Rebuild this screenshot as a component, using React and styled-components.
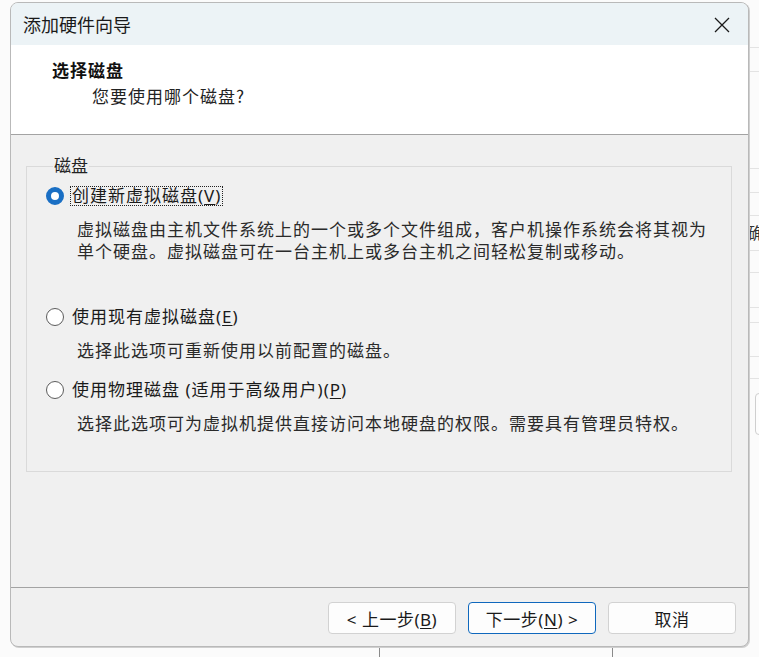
import React from "react";
import styled, { createGlobalStyle } from "styled-components";

const GlobalStyle = createGlobalStyle`
  html, body {
    margin: 0;
    padding: 0;
    background: #fbfbfb;
  }
  body {
    font-family: "Noto Sans", "Noto Sans CJK SC", sans-serif;
    color: #1a1a1a;
  }
`;

const bgRows = [48, 24, 97, 24, 23, 35, 22, 35, 15, 34, 22];

function CloseIcon() {
  return (
    <svg width="16" height="16" viewBox="0 0 16 16">
      <path d="M1 1 L15 15 M15 1 L1 15" stroke="#1a1a1a" strokeWidth="1.3" fill="none" />
    </svg>
  );
}

function Option({ checked, focused, label, hotkey, after, desc, gap }) {
  return (
    <OptionBlock $gap={gap}>
      <OptionRow>
        <Radio $checked={checked} />
        <OptionLabel $focused={focused}>
          {label}(<u>{hotkey}</u>){after}
        </OptionLabel>
      </OptionRow>
      <Desc>{desc}</Desc>
    </OptionBlock>
  );
}

export default function App() {
  return (
    <>
      <GlobalStyle />
      <Desktop>
        <BgApp>
          <BgTable>
            {bgRows.map((h, i) => (
              <BgRow key={i} style={{ height: h }}>
                {i === 5 && <BgCell>确定</BgCell>}
              </BgRow>
            ))}
          </BgTable>
          <BgButton />
          <BgDivider $left={379} />
          <BgDivider $left={612} />
        </BgApp>

        <Dialog>
          <TitleBar>
            <Title>添加硬件向导</Title>
            <CloseButton>
              <CloseIcon />
            </CloseButton>
          </TitleBar>

          <Header>
            <HeaderTitle>选择磁盘</HeaderTitle>
            <HeaderSub>您要使用哪个磁盘?</HeaderSub>
          </Header>

          <Body>
            <Group>
              <Legend>磁盘</Legend>
              <Option
                checked
                focused
                label="创建新虚拟磁盘"
                hotkey="V"
                gap={44}
                desc={
                  <>
                    虚拟磁盘由主机文件系统上的一个或多个文件组成，客户机操作系统会将其视为
                    <br />
                    单个硬盘。虚拟磁盘可在一台主机上或多台主机之间轻松复制或移动。
                  </>
                }
              />
              <Option
                label="使用现有虚拟磁盘"
                hotkey="E"
                gap={18}
                desc="选择此选项可重新使用以前配置的磁盘。"
              />
              <Option
                label="使用物理磁盘 (适用于高级用户)"
                hotkey="P"
                gap={0}
                desc="选择此选项可为虚拟机提供直接访问本地硬盘的权限。需要具有管理员特权。"
              />
            </Group>
          </Body>

          <Footer>
            <Button>
              &lt; 上一步(<u>B</u>)
            </Button>
            <Button $primary>
              下一步(<u>N</u>) &gt;
            </Button>
            <Button>取消</Button>
          </Footer>
        </Dialog>
      </Desktop>
    </>
  );
}

const Desktop = styled.div`
  position: relative;
  width: 759px;
  height: 657px;
  overflow: hidden;
  background: #fbfbfb;
`;

const BgApp = styled.div`
  position: absolute;
  inset: 0;
`;

const BgTable = styled.div`
  margin-left: 600px;
  display: flex;
  flex-direction: column;
`;

const BgRow = styled.div`
  box-sizing: border-box;
  border-bottom: 1px solid #e3e3e3;
  display: flex;
  align-items: center;
  justify-content: flex-end;
  overflow: hidden;
`;

const BgCell = styled.span`
  font-size: 16px;
  line-height: 20px;
  color: #333;
  margin-right: -3px;
  width: 14px;
  overflow: hidden;
  white-space: nowrap;
`;

const BgButton = styled.div`
  position: absolute;
  left: 755px;
  top: 393px;
  width: 60px;
  height: 40px;
  border: 1px solid #cfcfcf;
  border-radius: 4px;
  background: #fdfdfd;
`;

const BgDivider = styled.div`
  position: absolute;
  left: ${({ $left }) => $left}px;
  top: 600px;
  width: 1px;
  height: 60px;
  background: #8a8a8a;
`;

const Dialog = styled.div`
  position: absolute;
  left: 10px;
  top: 2px;
  width: 739px;
  height: 645px;
  box-sizing: border-box;
  border: 1px solid #b9b9b9;
  border-radius: 8px;
  box-shadow: 1px 1px 0 #cfcfcf;
  background: #f0f0f0;
  overflow: hidden;
  display: flex;
  flex-direction: column;
`;

const TitleBar = styled.div`
  height: 42px;
  flex: none;
  background: #ecf3f6;
  display: flex;
  align-items: center;
  justify-content: space-between;
  padding: 0 18px 0 12px;
`;

const Title = styled.div`
  font-family: "Noto Sans CJK SC", sans-serif;
  font-size: 18px;
  color: #1a1a1a;
  line-height: 1;
`;

const CloseButton = styled.div`
  display: flex;
  align-items: center;
  margin-top: 1px;
`;

const Header = styled.div`
  height: 90px;
  flex: none;
  box-sizing: border-box;
  background: #ffffff;
  border-bottom: 1px solid #a3a3a3;
  padding: 14px 0 0 41px;
  font-family: "Noto Sans CJK SC", sans-serif;
`;

const HeaderTitle = styled.div`
  font-size: 17px;
  font-weight: 700;
  letter-spacing: 1px;
  line-height: 22px;
  color: #111;
`;

const HeaderSub = styled.div`
  font-size: 17px;
  letter-spacing: 1px;
  line-height: 22px;
  margin: 4px 0 0 40px;
  color: #222;
`;

const Body = styled.div`
  flex: 1;
  padding: 20px 16px 0 15px;
`;

const Group = styled.fieldset`
  margin: 0;
  height: 317px;
  box-sizing: border-box;
  border: 1px solid #dadada;
  padding: 8px 0 0 19px;
  font-family: "Noto Sans", "Noto Sans CJK SC", sans-serif;
`;

const Legend = styled.legend`
  font-size: 17px;
  line-height: 22px;
  padding: 0 1px;
  margin-left: 7px;
  color: #222;
`;

const OptionBlock = styled.div`
  margin-bottom: ${({ $gap }) => $gap}px;
`;

const OptionRow = styled.div`
  display: flex;
  align-items: center;
  height: 22px;
`;

const Radio = styled.span`
  width: 18px;
  height: 18px;
  box-sizing: border-box;
  border-radius: 50%;
  flex: none;
  background: #ffffff;
  border: ${({ $checked }) => ($checked ? "5px solid #1a6fc4" : "1px solid #5c5c5c")};
`;

const OptionLabel = styled.span`
  margin-left: 7px;
  font-size: 17px;
  line-height: 18px;
  letter-spacing: 1px;
  color: #1a1a1a;
  padding: 0 1px;
  outline: ${({ $focused }) => ($focused ? "1px dotted #222" : "none")};
  outline-offset: 0;
  u {
    text-underline-offset: 2px;
  }
`;

const Desc = styled.div`
  margin: 11px 0 0 31px;
  font-size: 17px;
  line-height: 22px;
  letter-spacing: 1px;
  color: #2a2a2a;
  font-family: "Noto Sans CJK SC", sans-serif;
`;

const Footer = styled.div`
  height: 59px;
  flex: none;
  box-sizing: border-box;
  border-top: 1px solid #a3a3a3;
  display: flex;
  justify-content: flex-end;
  align-items: flex-start;
  gap: 12px;
  padding: 14px 12px 0 0;
`;

const Button = styled.button`
  width: 128px;
  height: 32px;
  box-sizing: border-box;
  background: #fdfdfd;
  border: 1px solid ${({ $primary }) => ($primary ? "#0f68bd" : "#d2d2d2")};
  border-radius: 4px;
  font-family: "Noto Sans", "Noto Sans CJK SC", sans-serif;
  font-size: 17px;
  color: #1a1a1a;
  padding: 0;
  letter-spacing: 0.5px;
  u {
    text-underline-offset: 2px;
  }
`;
